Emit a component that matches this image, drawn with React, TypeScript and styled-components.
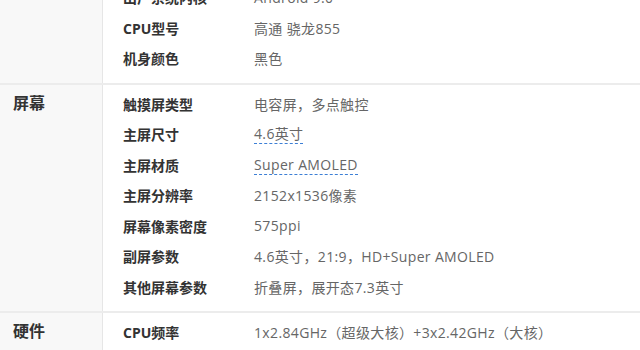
import React from 'react';
import styled, { createGlobalStyle } from 'styled-components';

const GlobalStyle = createGlobalStyle`
  html, body {
    margin: 0;
    padding: 0;
    background: #fff;
    overflow: hidden;
  }
  body {
    font-family: "Open Sans", "Noto Sans CJK SC", sans-serif;
  }
`;

type Param = { name: string; value: string; link?: boolean };
type Group = { title: string; params: Param[] };

const groups: Group[] = [
  {
    title: '',
    params: [
      { name: '出厂系统内核', value: 'Android 9.0' },
      { name: 'CPU型号', value: '高通 骁龙855' },
      { name: '机身颜色', value: '黑色' },
    ],
  },
  {
    title: '屏幕',
    params: [
      { name: '触摸屏类型', value: '电容屏，多点触控' },
      { name: '主屏尺寸', value: '4.6英寸', link: true },
      { name: '主屏材质', value: 'Super AMOLED', link: true },
      { name: '主屏分辨率', value: '2152x1536像素' },
      { name: '屏幕像素密度', value: '575ppi' },
      { name: '副屏参数', value: '4.6英寸，21:9，HD+Super AMOLED' },
      { name: '其他屏幕参数', value: '折叠屏，展开态7.3英寸' },
    ],
  },
  {
    title: '硬件',
    params: [
      { name: 'CPU频率', value: '1x2.84GHz（超级大核）+3x2.42GHz（大核）' },
      { name: 'CPU核心数', value: '八核' },
    ],
  },
];

const Table = styled.div`
  margin-top: -22px;
  display: flex;
  flex-direction: column;
  width: 640px;
`;

const Section = styled.section<{ $first?: boolean }>`
  display: flex;
  border-top: ${p => (p.$first ? 'none' : '2px solid #ececec')};
`;

const Side = styled.div`
  width: 103px;
  flex-shrink: 0;
  background: #f8f8f8;
  border-right: 1px solid #e6e6e6;
  padding: 3px 0 0 13px;
  box-sizing: border-box;
`;

const SideTitle = styled.h3`
  margin: 0;
  height: 30px;
  line-height: 30px;
  font-size: 16px;
  font-weight: bold;
  color: #333;
  font-family: "Open Sans", "Noto Sans CJK SC", sans-serif;
`;

const Body = styled.div`
  flex: 1;
  padding: 4px 0 9px 20px;
`;

const Row = styled.div`
  display: flex;
  align-items: center;
  height: 30.5px;
  font-size: 14px;
  font-family: "Open Sans", "Noto Sans CJK SC", sans-serif;
`;

const Label = styled.div`
  width: 131px;
  flex-shrink: 0;
  color: #333;
  font-weight: bold;
`;

const Value = styled.div`
  color: #666;
  white-space: nowrap;
  letter-spacing: 0.35px;
  text-spacing-trim: space-all;
`;

const Linked = styled.span`
  display: inline-block;
  line-height: 18px;
  border-bottom: 1px dashed #3c7fd6;
  color: #666;
`;

export default function App() {
  return (
    <>
      <GlobalStyle />
      <Table>
        {groups.map((g, i) => (
          <Section key={i} $first={i === 0}>
            <Side>{g.title && <SideTitle>{g.title}</SideTitle>}</Side>
            <Body>
              {g.params.map(p => (
                <Row key={p.name}>
                  <Label>{p.name}</Label>
                  <Value>{p.link ? <Linked>{p.value}</Linked> : p.value}</Value>
                </Row>
              ))}
            </Body>
          </Section>
        ))}
      </Table>
    </>
  );
}
